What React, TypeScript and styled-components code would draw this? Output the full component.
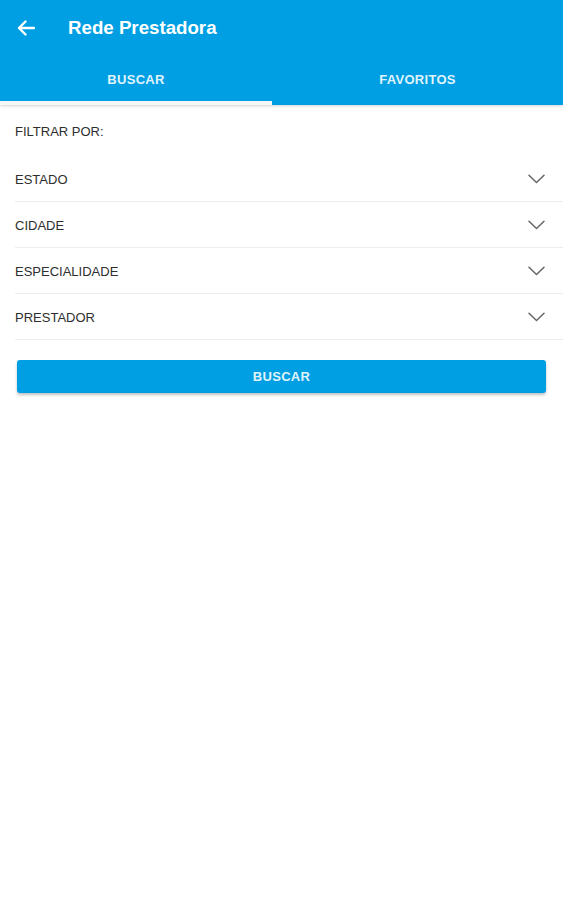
import styled, { createGlobalStyle } from 'styled-components';

const filters = ['ESTADO', 'CIDADE', 'ESPECIALIDADE', 'PRESTADOR'];

function App() {
  return (
    <>
      <GlobalStyle />
      <Page>
        <Header>
          <TitleRow>
            <BackButton type="button" aria-label="voltar">
              <svg width="18" height="16" viewBox="0 0 18 16" fill="none">
                <path d="M17 8H2M8.5 1.5L2 8l6.5 6.5" stroke="#fff" strokeWidth="2.4" strokeLinecap="round" strokeLinejoin="round" />
              </svg>
            </BackButton>
            <Title>Rede Prestadora</Title>
          </TitleRow>
          <Tabs>
            <Tab $active>BUSCAR</Tab>
            <Tab>FAVORITOS</Tab>
          </Tabs>
        </Header>
        <Content>
          <FilterLabel>FILTRAR POR:</FilterLabel>
          <FilterList>
            {filters.map((name) => (
              <FilterRow key={name}>
                <span>{name}</span>
                <svg width="17" height="10" viewBox="0 0 17 10" fill="none">
                  <path d="M1 1.2l7.5 7.3L16 1.2" stroke="#666" strokeWidth="1.5" strokeLinecap="round" strokeLinejoin="round" />
                </svg>
              </FilterRow>
            ))}
          </FilterList>
          <SearchButton type="button">BUSCAR</SearchButton>
        </Content>
      </Page>
    </>
  );
}

export default App;

const GlobalStyle = createGlobalStyle`
  body {
    margin: 0;
    background: #fff;
    font-family: "Liberation Sans", Arial, sans-serif;
  }

  * {
    box-sizing: border-box;
  }
`;

const Page = styled.div`
  width: 563px;
  min-height: 900px;
  background: #fff;
`;

const Header = styled.header`
  background-color: #009fe3;
  box-shadow: 0 1px 3px rgba(0, 0, 0, 0.18);
`;

const TitleRow = styled.div`
  display: flex;
  align-items: center;
  height: 55px;
  padding-left: 17px;
`;

const BackButton = styled.button`
  display: flex;
  align-items: center;
  padding: 0;
  margin: 0 33px 0 0;
  background: transparent;
  border: none;
  cursor: pointer;
`;

const Title = styled.h1`
  margin: 0;
  font-size: 18.7px;
  font-weight: 700;
  color: #fff;
`;

const Tabs = styled.div`
  display: flex;
  height: 50px;
`;

const Tab = styled.div<{ $active?: boolean }>`
  flex: ${({ $active }) => ($active ? '0 0 272px' : '1')};
  display: flex;
  justify-content: center;
  align-items: center;
  padding-top: 3px;
  font-size: 13px;
  font-weight: 700;
  letter-spacing: 0.3px;
  color: rgba(255, 255, 255, 0.9);
  border-bottom: 4px solid ${({ $active }) => ($active ? '#f4f6f8' : 'transparent')};
`;

const Content = styled.main`
  padding: 18px 0 0 15px;
`;

const FilterLabel = styled.div`
  font-size: 13px;
  color: #2e2e2e;
  height: 18px;
  line-height: 18px;
  margin-bottom: 15px;
`;

const FilterList = styled.ul`
  list-style: none;
  margin: 0;
  padding: 0;
`;

const FilterRow = styled.li`
  display: flex;
  justify-content: space-between;
  align-items: center;
  height: 46px;
  padding: 1px 18px 0 0;
  border-bottom: 1.5px solid #ededed;
  font-size: 13px;
  color: #2e2e2e;
`;

const SearchButton = styled.button`
  display: block;
  width: 529px;
  height: 33px;
  margin: 20px 0 0 2px;
  border: none;
  border-radius: 3px;
  background-color: #009fe3;
  box-shadow: 0 2px 3px rgba(0, 0, 0, 0.25);
  font-family: inherit;
  font-size: 13px;
  font-weight: 700;
  letter-spacing: 0.3px;
  color: rgba(255, 255, 255, 0.9);
  cursor: pointer;
`;
